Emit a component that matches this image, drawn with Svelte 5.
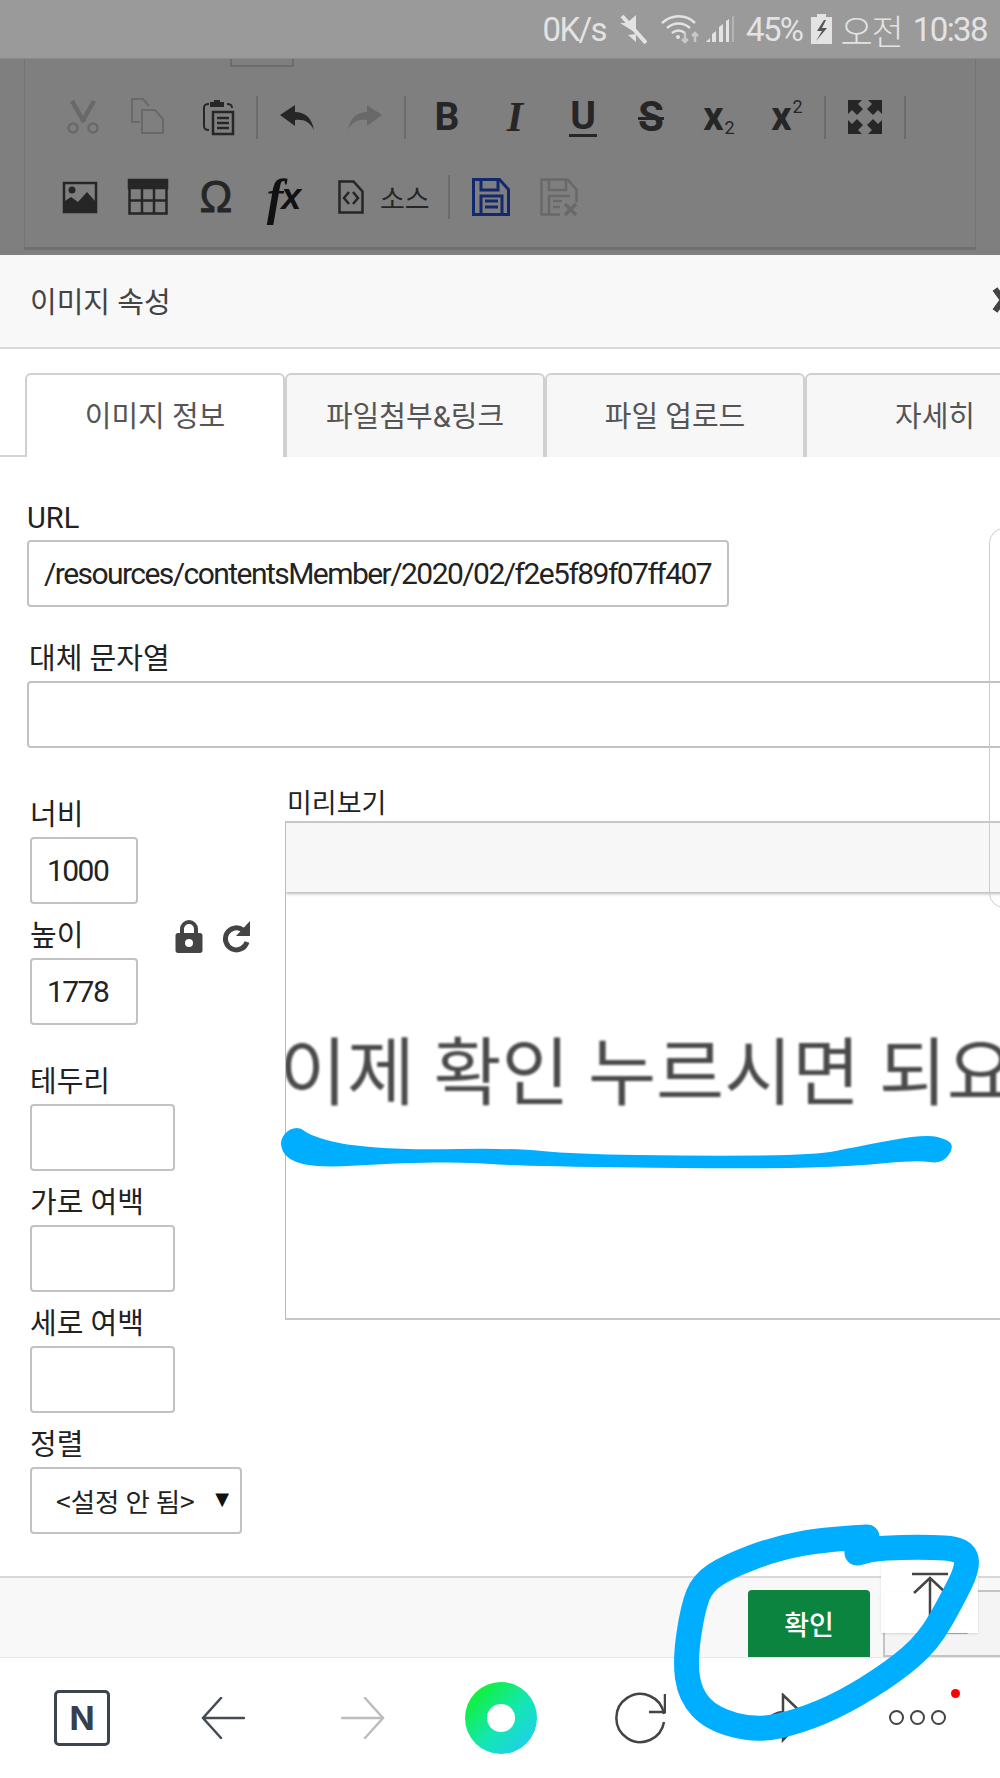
<script>
    const fields = [
        { label: '너비', value: '1000', size: 'short' },
        { label: '높이', value: '1778', size: 'short', lock: true },
        { label: '테두리', value: '', size: 'mid', gap: true },
        { label: '가로 여백', value: '', size: 'mid' },
        { label: '세로 여백', value: '', size: 'mid' }
    ];

    const tabs = ['이미지 정보', '파일첨부&링크', '파일 업로드', '자세히'];

    // hand drawn marks on top of the screenshot, traced from the picture
    const underline = [
        [279, 1143], [287, 1130], [300, 1127], [309, 1135], [344, 1145], [408, 1150], [510, 1148],
        [574, 1154], [702, 1156], [816, 1155], [855, 1147], [925, 1134], [950, 1140], [953, 1150],
        [941, 1164], [918, 1160], [855, 1166], [765, 1169], [510, 1166], [472, 1162], [395, 1163],
        [319, 1168], [287, 1160]
    ];
    const circle = [
        [867, 1537], [827, 1539], [777, 1548], [727, 1567], [703, 1583], [693, 1607], [685, 1660],
        [690, 1695], [712, 1719], [757, 1731], [800, 1721], [843, 1703], [893, 1672], [928, 1642],
        [952, 1600], [969, 1565], [962, 1549], [927, 1547], [877, 1548], [857, 1553]
    ];

    function smooth(points, closed) {
        const mid = (a, b) => [(a[0] + b[0]) / 2, (a[1] + b[1]) / 2];
        if (closed) {
            const start = mid(points[points.length - 1], points[0]);
            let d = `M${start[0]} ${start[1]}`;
            points.forEach((p, i) => {
                const m = mid(p, points[(i + 1) % points.length]);
                d += ` Q${p[0]} ${p[1]} ${m[0]} ${m[1]}`;
            });
            return d + ' Z';
        }
        let d = `M${points[0][0]} ${points[0][1]}`;
        for (let i = 1; i < points.length - 1; i++) {
            const m = mid(points[i], points[i + 1]);
            d += ` Q${points[i][0]} ${points[i][1]} ${m[0]} ${m[1]}`;
        }
        const last = points[points.length - 1];
        return d + ` L${last[0]} ${last[1]}`;
    }
</script>

<div class="page">
    <div class="status">
        <span>0K/s</span>
        <svg width="28" height="30" viewBox="0 0 28 30">
            <path d="M1 9h7l9-8v18z M9 21l8 7v-8z" fill="#e3e3e3" />
            <path d="M3 2l24 27" stroke="#e3e3e3" stroke-width="4" />
        </svg>
        <svg width="41" height="30" viewBox="0 0 41 30" fill="none" stroke="#e3e3e3">
            <path d="M2 9c10-9 24-9 33 0" stroke-width="2.5" />
            <path d="M7 14c7-6 16-6 23 0" stroke-width="2.5" />
            <path d="M12 19c4-3 9-3 13 0" stroke-width="2.5" />
            <circle cx="18" cy="23" r="2" fill="#e3e3e3" stroke="none" />
            <path d="M25 19v9M22 25l3 3 3-3" stroke="#c8c8c8" stroke-width="2.5" />
            <path d="M35 28v-9M32 22l3-3 3 3" stroke="#c8c8c8" stroke-width="2.5" />
        </svg>
        <svg class="signal" width="30" height="28" viewBox="0 0 30 28">
            <path d="M1 27l4-4v4z M7 27v-8l4-3v11z M14 27v-15l4-3v18z M21 27v-21l3-2v23z" fill="#e3e3e3" />
            <path d="M27 27v-25l2-2v27z" fill="#b4b4b4" />
        </svg>
        <span class="pct">45%</span>
        <svg width="21" height="30" viewBox="0 0 21 30">
            <path d="M6 0h9v3h6v27h-21v-27h6z" fill="#e3e3e3" />
            <path d="M13 6l-7 11h5l-6 10 11-13h-5l4-8z" fill="#555" />
        </svg>
        <span class="ampm">오전</span>
        <span>10:38</span>
    </div>

    <div class="dim">
        <div class="editor">
            <div class="stub"></div>
            <div class="tb-row first">
                <div class="tool off">
                    <svg width="36" height="36" viewBox="0 0 36 36" fill="none" stroke="#696969">
                        <path d="M7 2l12 21M29 2l-12 21" stroke-width="4.5" />
                        <circle cx="8" cy="29" r="4.5" stroke-width="2.5" />
                        <circle cx="28" cy="29" r="4.5" stroke-width="2.5" />
                    </svg>
                </div>
                <div class="tool off">
                    <svg width="36" height="36" viewBox="0 0 36 36" fill="none" stroke="#696969" stroke-width="2">
                        <path d="M7 23H-1V0H10l6 7" />
                        <path d="M9 11h13l8 9v14H9z" />
                    </svg>
                </div>
                <div class="tool">
                    <svg width="36" height="36" viewBox="4 -1 36 36" fill="none" stroke="#262626" stroke-width="2">
                        <path d="M12 30c-4 0-5-1-5-4V8c0-3 1-4 5-4M30 4c4 0 5 1 5 4" />
                        <path d="M13 2h14v5H13z" fill="#262626" stroke="none" />
                        <path d="M17 0h6v3h-6z" fill="#262626" stroke="none" />
                        <path d="M16 12h20v22H16z" stroke-width="2.5" />
                        <path d="M20 18h12M20 23h12M20 28h12" stroke-width="2.5" />
                    </svg>
                </div>
                <i class="sep"></i>
                <div class="tool">
                    <svg width="36" height="36" viewBox="0 0 36 36"><path d="M1 16L16 6v7c10 0 17 6 19 18-4-8-10-11-19-10v6z" fill="#262626" /></svg>
                </div>
                <div class="tool">
                    <svg width="36" height="36" viewBox="0 0 36 36"><path d="M35 16L20 6v7c-10 0-17 6-19 18 4-8 10-11 19-10v6z" fill="#696969" /></svg>
                </div>
                <i class="sep wide"></i>
                <div class="tool glyph bold">B</div>
                <div class="tool glyph slab">I</div>
                <div class="tool glyph under"><span>U</span></div>
                <div class="tool glyph strike"><span>S</span></div>
                <div class="tool glyph script">x<small class="sub">2</small></div>
                <div class="tool glyph script">x<small class="sup">2</small></div>
                <i class="sep"></i>
                <div class="tool">
                    <svg width="36" height="36" viewBox="0 0 36 36" fill="#262626">
                        <path d="M1 1h14l-4 4 5 5-6 6-5-5-4 4z" />
                        <path d="M35 1H21l4 4-5 5 6 6 5-5 4 4z" />
                        <path d="M1 35h14l-4-4 5-5-6-6-5 5-4-4z" />
                        <path d="M35 35H21l4-4-5-5 6-6 5 5 4-4z" />
                    </svg>
                </div>
                <i class="sep wide"></i>
            </div>
            <div class="tb-row second">
                <div class="tool">
                    <svg width="36" height="36" viewBox="0 0 36 36">
                        <path d="M2 4h32v29H2z" fill="none" stroke="#262626" stroke-width="2.5" />
                        <circle cx="10" cy="11" r="3.5" fill="#262626" />
                        <path d="M3 32V22l6-4 7 5 9-10 8 9v10z" fill="#262626" />
                    </svg>
                </div>
                <div class="tool">
                    <svg width="40" height="36" viewBox="0 0 40 36" fill="none" stroke="#262626" stroke-width="2.5">
                        <path d="M1 1h38v8H1z" fill="#262626" />
                        <path d="M1.500 9v25.500h37V9M1.500 21.500h37M14 9v25M26 9v25" />
                    </svg>
                </div>
                <div class="tool glyph omega">Ω</div>
                <div class="tool glyph fx"><span>f</span><em>x</em></div>
                <div class="source">
                    <svg width="26" height="34" viewBox="0 0 26 34" fill="none" stroke="#262626" stroke-width="2.5">
                        <path d="M1.500 1.500h14l9 10v21h-23z" />
                        <path d="M11 12l-5 6 5 6M15 12l5 6-5 6" />
                    </svg>
                    <span>소스</span>
                </div>
                <i class="sep tall"></i>
                <div class="tool">
                    <svg width="38" height="38" viewBox="0 0 38 38" fill="none" stroke="#12296f" stroke-width="3">
                        <path d="M1.500 1.500h26l9 10v25h-35z" />
                        <path d="M9 2v10h17V2M9 36V18h21v18" />
                        <path d="M13 23h13M13 29h13" />
                    </svg>
                </div>
                <div class="tool">
                    <svg width="38" height="38" viewBox="0 0 38 38" fill="none" stroke="#696969" stroke-width="2.500">
                        <path d="M20 36.500H1.500v-35h26l9 10v13" />
                        <path d="M9 2v10h17V2M9 36V18h21" />
                        <path d="M13 23h9M13 29h7" />
                        <path d="M25 26l11 11M36 26L25 37" stroke-width="3.500" />
                    </svg>
                </div>
            </div>
        </div>
    </div>

    <div class="modal">
        <div class="head">
            <span>이미지 속성</span>
            <svg class="close" width="22" height="26" viewBox="0 0 22 26">
                <path d="M3 2l16 22M19 2L3 24" stroke="#444" stroke-width="6" />
            </svg>
        </div>

        <div class="tabs">
            {#each tabs as tab, i}
                <div class="tab" class:active={i === 0}>{tab}</div>
            {/each}
        </div>

        <div class="body">
            <label class="lbl" for="url">URL</label>
            <input id="url" class="url" readonly value="/resources/contentsMember/2020/02/f2e5f89f07ff4072b1a9" />

            <label class="lbl alt-lbl" for="alt">대체 문자열</label>
            <input id="alt" class="alt" readonly />

            <div class="columns">
                <div class="left">
                    {#each fields as f}
                        <div class="field" class:gap={f.gap}>
                            <div class="lbl-row">
                                <span class="lbl">{f.label}</span>
                                {#if f.lock}
                                    <div class="ratio">
                                        <svg width="28" height="33" viewBox="0 0 28 33">
                                            <path d="M7 14V9a7 7 0 0 1 14 0v5" fill="none" stroke="#444" stroke-width="4" />
                                            <path fill-rule="evenodd" d="M3 13h22c1.500 0 2.500 1 2.500 2.500v15c0 1.500-1 2.500-2.500 2.500H3c-1.500 0-2.500-1-2.500-2.500v-15C.5 14 1.500 13 3 13zm11 6a4 4 0 0 0-4 4 4 4 0 0 0 8 0 4 4 0 0 0-4-4z" fill="#444" />
                                        </svg>
                                        <svg width="28" height="35" viewBox="0 0 28 35">
                                            <path d="M21 11a11 11 0 1 0 4 12" fill="none" stroke="#444" stroke-width="5" />
                                            <path d="M28 2v15H14z" fill="#444" />
                                        </svg>
                                    </div>
                                {/if}
                            </div>
                            <input class={f.size} readonly value={f.value} />
                        </div>
                    {/each}
                    <div class="field">
                        <div class="lbl-row"><span class="lbl">정렬</span></div>
                        <div class="select-wrap">
                            <select>
                                <option>&lt;설정 안 됨&gt;</option>
                            </select>
                            <span class="caret">▼</span>
                        </div>
                    </div>
                </div>

                <div class="right">
                    <div class="lbl small">미리보기</div>
                    <div class="preview">
                        <div class="preview-top"></div>
                        <div class="preview-text">이제 확인 누르시면 되요</div>
                    </div>
                </div>
            </div>
        </div>

        <div class="foot">
            <button class="ok">확인</button>
            <button class="cancel">취소</button>
        </div>
    </div>

    <div class="nav">
        <div class="n-box">N</div>
        <svg width="44" height="42" viewBox="0 0 44 42" fill="none" stroke="#444b52" stroke-width="2.500" stroke-linecap="round">
            <path d="M43 21H2M20 1L2 21l18 20" />
        </svg>
        <svg width="44" height="42" viewBox="0 0 44 42" fill="none" stroke="#bdbdbd" stroke-width="2.500" stroke-linecap="round">
            <path d="M1 21h41M24 1l18 20-18 20" />
        </svg>
        <div class="orb"><div></div></div>
        <svg width="52" height="52" viewBox="0 0 52 52" fill="none" stroke="#444" stroke-width="2.500">
            <path d="M50 22A24 24 0 1 0 50 30" />
            <path d="M35 20h16V2" />
        </svg>
        <svg class="share" width="48" height="50" viewBox="0 0 48 50" fill="none" stroke="#444" stroke-width="2.500">
            <path d="M24 2l22 21-22 24v-13C14 34 6 38 2 46c0-14 8-26 22-27z" />
        </svg>
        <div class="more">
            <i></i><i></i><i></i>
            <b></b>
        </div>
    </div>

    <div class="to-top">
        <svg width="38" height="46" viewBox="0 0 38 46" fill="none" stroke="#444" stroke-width="2.500">
            <path d="M1 2h36M19 46V6M3 21L19 6l16 15" />
        </svg>
    </div>

    <div class="side-edge"></div>

    <svg class="marks" width="1000" height="1778" viewBox="0 0 1000 1778">
        <path d={smooth(underline, true)} fill="#00aeff" />
        <path d={smooth(circle, false)} fill="none" stroke="#00aeff" stroke-width="25" stroke-linecap="round" stroke-linejoin="round" />
    </svg>
</div>

<style>
    :global(body) {
        margin: 0;
        background: #fff;
    }

    .page {
        position: relative;
        display: flex;
        flex-direction: column;
        width: 1000px;
        height: 1778px;
        overflow: hidden;
        font-family: Roboto, "Noto Sans CJK KR", sans-serif;
        color: #222;
    }

    /* status bar */
    .status {
        display: flex;
        align-items: center;
        justify-content: flex-end;
        gap: 13px;
        flex: none;
        height: 59px;
        padding-right: 13px;
        box-sizing: border-box;
        background: #9a9a9a;
        color: #e3e3e3;
        font-size: 33px;
        letter-spacing: -1.6px;
        border-bottom: 1px solid #8a8a8a;
    }

    .status .signal { margin-left: -9px; }
    .status .pct { margin-left: -2px; margin-right: -4px; }
    .status .ampm { margin: 0 -3px 0 -5px; font-size: 35px; letter-spacing: -1px; font-weight: 300; }

    /* dimmed editor behind the dialog */
    .dim {
        flex: none;
        height: 196px;
        background: #7f7f7f;
        padding: 0 24px;
        box-sizing: border-box;
    }

    .editor {
        height: 191px;
        box-sizing: border-box;
        border-left: 1px solid #747474;
        border-right: 1px solid #747474;
        border-bottom: 3px solid #6f6f6f;
    }

    .stub {
        width: 64px;
        height: 8px;
        margin-left: 205px;
        box-sizing: border-box;
        border: 2px solid #6d6d6d;
        border-top: none;
    }

    .tb-row {
        display: flex;
        align-items: center;
        height: 44px;
    }

    .tb-row.first {
        margin-top: 28px;
        padding-left: 24px;
    }

    .tb-row.second {
        margin-top: 36px;
        padding-left: 21px;
    }

    .tool {
        display: flex;
        align-items: center;
        justify-content: center;
        flex: none;
        width: 68px;
        height: 44px;
    }

    .tool svg { overflow: visible; }

    .sep {
        flex: none;
        width: 2px;
        height: 43px;
        margin: 0 5px 0 3px;
        background: #6c6c6c;
    }

    .sep.wide { margin: 0 7px 0 5px; }
    .sep.tall { margin: 0 7px 0 18px; height: 44px; }

    .glyph {
        color: #262626;
        font-family: Roboto, sans-serif;
        font-weight: 700;
        font-size: 39px;
        line-height: 1;
    }

    .slab {
        font-family: "Liberation Serif", serif;
        font-style: italic;
        font-size: 42px;
    }

    .under span {
        border-bottom: 3px solid #262626;
        line-height: 36px;
        padding: 0 1px;
    }

    .strike span {
        font-size: 42px;
        text-decoration: line-through;
        text-decoration-thickness: 3px;
    }

    .script { font-size: 40px; }

    .script small {
        font-size: 18px;
        font-weight: 400;
        margin-left: 1px;
    }

    .sub { align-self: flex-end; margin-bottom: 2px; }
    .sup { align-self: flex-start; margin-top: 3px; }

    .omega {
        font-family: "Liberation Sans", sans-serif;
        font-weight: 400;
        font-size: 44px;
        -webkit-text-stroke: 0.8px #262626;
    }

    .fx {
        font-family: "Liberation Serif", serif;
        font-style: italic;
        color: #111;
    }

    .fx span { font-size: 50px; }
    .fx em { font-size: 36px; margin-left: -2px; font-family: "Liberation Sans", sans-serif; }

    .source {
        display: flex;
        align-items: center;
        gap: 16px;
        padding-left: 20px;
        color: #262626;
        font-size: 27px;
        font-family: "Noto Sans CJK KR", sans-serif;
        font-weight: 400;
    }

    /* dialog */
    .modal {
        display: flex;
        flex-direction: column;
        flex: 1;
        min-height: 0;
        background: #fff;
    }

    .head {
        display: flex;
        align-items: center;
        justify-content: space-between;
        flex: none;
        height: 94px;
        padding: 0 0 2px 30px;
        box-sizing: border-box;
        background: #f8f8f8;
        border-bottom: 2px solid #d8d8d8;
        font-size: 29px;
        font-weight: 400;
        color: #444;
    }

    .close { margin-right: -14px; }

    .tabs {
        display: flex;
        flex: none;
        margin-top: 24px;
        padding-left: 25px;
        height: 84px;
        box-sizing: border-box;
        border-bottom: 2px solid #d4d4d4;
    }

    .tab {
        display: flex;
        align-items: center;
        justify-content: center;
        flex: none;
        width: 260px;
        height: 84px;
        padding-bottom: 4px;
        box-sizing: border-box;
        background: #f7f7f7;
        border: 2px solid #d0d0d0;
        border-bottom: none;
        border-radius: 6px 6px 0 0;
        font-size: 29px;
        color: #555;
    }

    .tab.active {
        background: #fff;
        position: relative;
    }

    .body {
        flex: 1;
        padding: 43px 0 0 27px;
        min-height: 0;
    }

    .lbl {
        display: block;
        height: 34px;
        line-height: 37px;
        font-size: 29px;
        color: #222;
    }

    .alt-lbl { margin: 34px 0 6px 2px; }

    input, select {
        display: block;
        box-sizing: border-box;
        height: 67px;
        padding: 0 15px;
        border: 2px solid #c2c2c2;
        border-radius: 4px;
        background: #fff;
        color: #222;
        font: inherit;
        font-size: 30px;
        letter-spacing: -1.55px;
        outline: none;
    }

    .url {
        width: 702px;
        margin-top: 6px;
    }

    .alt { width: 1000px; }

    .columns {
        display: flex;
        margin-top: 38px;
    }

    .left {
        flex: none;
        width: 258px;
        padding: 11px 0 0 3px;
        box-sizing: border-box;
    }

    .field { margin-bottom: 14px; }
    .field.gap { margin-top: 39px; }

    .lbl-row {
        display: flex;
        align-items: flex-start;
        justify-content: space-between;
        width: 220px;
        height: 34px;
        margin-bottom: 6px;
    }

    .ratio {
        display: flex;
        gap: 19px;
        margin-top: 1px;
        align-items: center;
    }

    .short { width: 108px; }
    .mid { width: 145px; }

    .select-wrap {
        position: relative;
        width: 212px;
    }

    select {
        width: 212px;
        padding-left: 24px;
        appearance: none;
        font-family: "Noto Sans CJK KR", sans-serif;
        font-size: 26.5px;
        letter-spacing: 0;
    }

    .caret {
        position: absolute;
        right: 13px;
        top: 21px;
        font-family: "DejaVu Sans", sans-serif;
        font-size: 18px;
        color: #111;
    }

    .right {
        flex: 1;
        min-width: 0;
    }

    .lbl.small { font-size: 27px; margin-left: 2px; }

    .preview {
        width: 800px;
        height: 499px;
        margin-top: 1px;
        box-sizing: border-box;
        border-left: 1px solid #bbb;
        border-top: 2px solid #c8c8c8;
        border-bottom: 2px solid #c8c8c8;
        overflow: hidden;
    }

    .preview-top {
        height: 69px;
        background: #f7f7f7;
        box-shadow: 0 2px 3px #bbb;
    }

    .preview-text {
        margin-top: 140px;
        font-size: 74px;
        line-height: 84px;
        white-space: nowrap;
        color: #4a4a4a;
        filter: blur(0.8px);
        margin-left: -7px;
    }

    .foot {
        display: flex;
        justify-content: flex-start;
        align-items: flex-end;
        flex: none;
        height: 81px;
        padding-left: 748px;
        gap: 13px;
        box-sizing: border-box;
        background: #f8f8f8;
        border-top: 2px solid #d8d8d8;
    }

    .foot button {
        flex: none;
        width: 122px;
        height: 67px;
        border-radius: 4px 4px 0 0;
        font-family: "Noto Sans CJK KR", sans-serif;
        font-size: 27px;
    }

    .ok {
        background: #0b843f;
        border: none;
        color: #fff;
        font-weight: 500;
    }

    .cancel {
        background: #f4f4f4;
        border: 2px solid #c4c4c4;
        color: #aaa;
    }

    /* browser bar */
    .nav {
        display: flex;
        align-items: center;
        flex: none;
        height: 121px;
        padding: 0 0 1px 54px;
        box-sizing: border-box;
        background: #fff;
        border-top: 1px solid #e6e6e6;
    }

    .n-box {
        display: flex;
        align-items: center;
        justify-content: center;
        flex: none;
        width: 56px;
        height: 56px;
        box-sizing: border-box;
        border: 3px solid #3c444d;
        border-radius: 5px;
        color: #36404a;
        font-family: Inter, sans-serif;
        font-weight: 700;
        font-size: 33px;
        margin-right: 91px;
    }

    .nav > svg { flex: none; }
    .nav > svg:nth-child(2) { margin-right: 96px; }
    .nav > svg:nth-child(3) { margin-right: 80px; }

    .orb {
        display: flex;
        align-items: center;
        justify-content: center;
        flex: none;
        width: 72px;
        height: 72px;
        border-radius: 50%;
        background: linear-gradient(135deg, #12f03c 15%, #14e6b4 55%, #1fcfe8 90%);
        margin-right: 77px;
    }

    .orb div {
        width: 28px;
        height: 28px;
        border-radius: 50%;
        background: #fff;
    }

    .share { margin-left: 93px; }

    .more {
        position: relative;
        display: flex;
        gap: 6px;
        margin-left: 82px;
    }

    .more i {
        width: 15px;
        height: 15px;
        box-sizing: border-box;
        border: 2.5px solid #444;
        border-radius: 50%;
    }

    .more b {
        position: absolute;
        right: -14px;
        top: -21px;
        width: 9px;
        height: 9px;
        border-radius: 50%;
        background: #f00;
    }

    /* floating pieces */
    .to-top {
        position: absolute;
        left: 881px;
        top: 1562px;
        display: flex;
        justify-content: center;
        width: 97px;
        height: 71px;
        padding: 10px 0 0 0;
        box-sizing: border-box;
        background: rgba(255, 255, 255, 0.96);
        box-shadow: 0 1px 2px rgba(0, 0, 0, 0.12);
    }

    .side-edge {
        position: absolute;
        left: 989px;
        top: 528px;
        width: 30px;
        height: 380px;
        box-sizing: border-box;
        border: 1px solid #ccc;
        border-radius: 16px;
    }

    .marks {
        position: absolute;
        left: 0;
        top: 0;
        pointer-events: none;
    }
</style>
